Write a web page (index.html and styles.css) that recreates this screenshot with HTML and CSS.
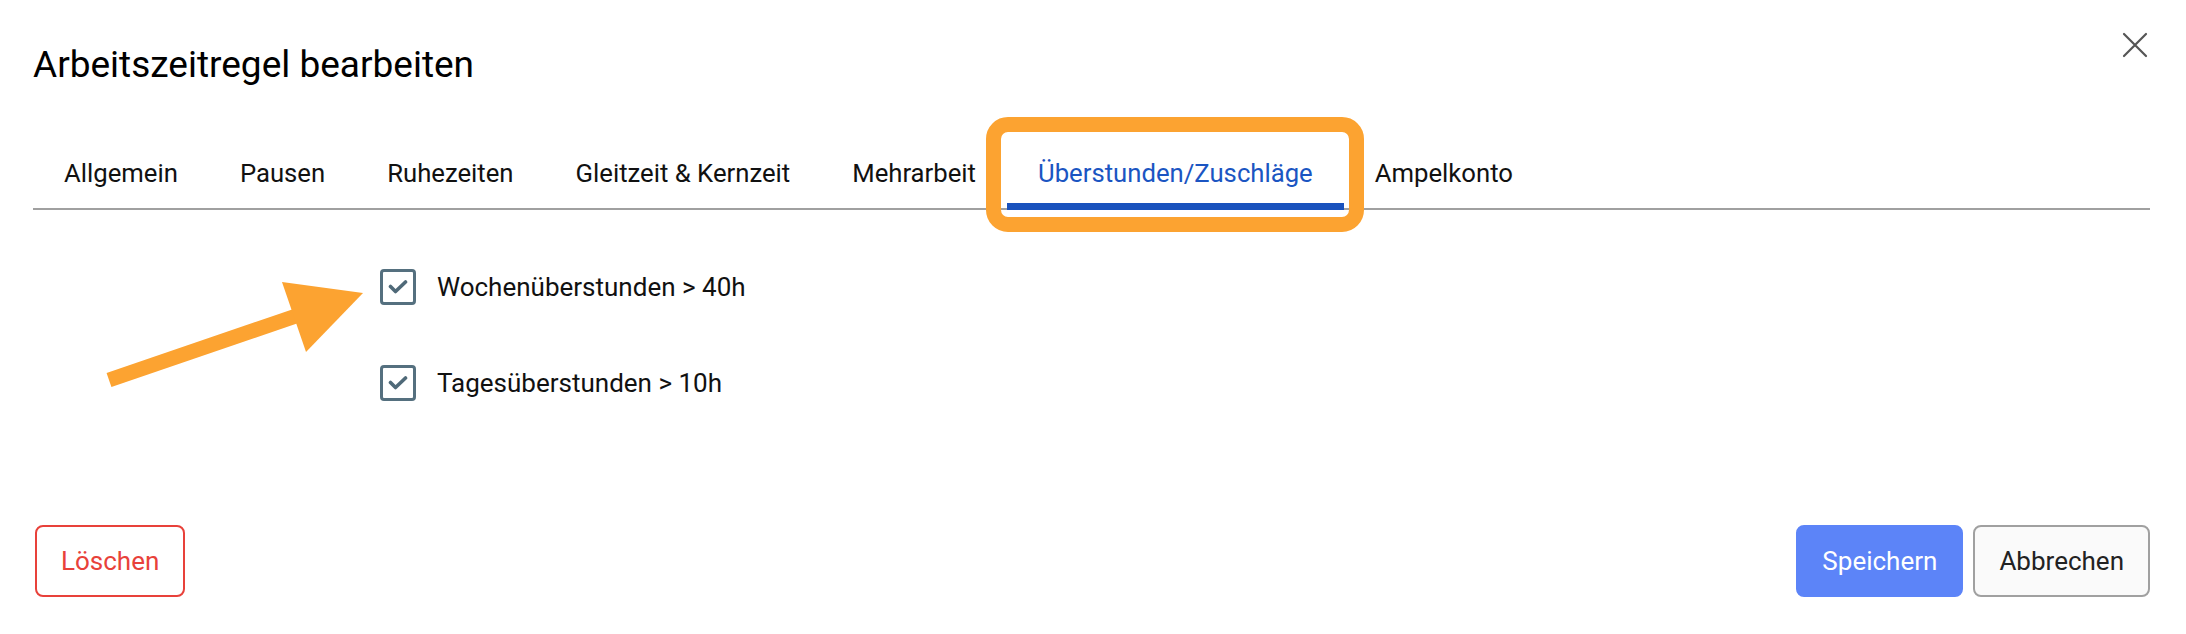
FILE: index.html
```html
<!DOCTYPE html>
<html lang="de">
<head>
    <meta charset="UTF-8">
    <meta name="viewport" content="width=device-width, initial-scale=1.0">
    <title>Arbeitszeitregel bearbeiten</title>
    <link rel="stylesheet" href="styles.css">
</head>
<body>

    <div class="dialog">
        <div class="dialog-header">
            <h1 class="dialog-title">Arbeitszeitregel bearbeiten</h1>
            <svg class="close" width="26" height="26" viewBox="0 0 26 26">
                <path d="M2 2 L24 24 M24 2 L2 24" stroke="#555" stroke-width="2.2" fill="none" stroke-linecap="round"/>
            </svg>
        </div>

        <div class="tabs">
            <div class="tab">Allgemein</div>
            <div class="tab">Pausen</div>
            <div class="tab">Ruhezeiten</div>
            <div class="tab">Gleitzeit &amp; Kernzeit</div>
            <div class="tab">Mehrarbeit</div>
            <div class="tab active">
                Überstunden/Zuschläge
                <!-- Markierung -->
                <span class="highlight"></span>
            </div>
            <div class="tab">Ampelkonto</div>
        </div>

        <div class="options">
            <label class="option">
                <span class="checkbox">
                    <svg width="20" height="14" viewBox="0 0 20 14"><path d="M2.5 6.5 L7.5 11.5 L17.5 2" stroke="#4f6978" stroke-width="3.6" fill="none" stroke-linecap="round" stroke-linejoin="round"/></svg>
                </span>
                <span class="option-label">Wochenüberstunden &gt; 40h</span>
            </label>
            <label class="option">
                <span class="checkbox">
                    <svg width="20" height="14" viewBox="0 0 20 14"><path d="M2.5 6.5 L7.5 11.5 L17.5 2" stroke="#4f6978" stroke-width="3.6" fill="none" stroke-linecap="round" stroke-linejoin="round"/></svg>
                </span>
                <span class="option-label">Tagesüberstunden &gt; 10h</span>
            </label>
        </div>

        <div class="dialog-footer">
            <button class="btn btn-danger">Löschen</button>
            <div class="btn-group">
                <button class="btn btn-primary">Speichern</button>
                <button class="btn btn-default">Abbrechen</button>
            </div>
        </div>

        <!-- Pfeil -->
        <svg class="arrow" width="270" height="120" viewBox="0 0 270 120">
            <line x1="9" y1="105" x2="196" y2="41" stroke="#fca331" stroke-width="15"/>
            <polygon points="182,7 263,18 206,77" fill="#fca331"/>
        </svg>
    </div>

</body>
</html>
```

FILE: styles.css
```css
body {
    margin: 0;
    padding: 0;
    background-color: #fff;
    color: #000;
    font-family: Roboto, "Noto Sans", sans-serif;
}

.dialog {
    position: relative;
    padding: 33px 36px 0 33px;
}

.dialog-header {
    display: flex;
    justify-content: space-between;
    align-items: flex-start;
}

.dialog-title {
    margin: 11px 0 0;
    font-size: 37px;
    font-weight: 400;
    line-height: 42px;
}

.close {
    margin-top: -1px;
    margin-right: 2px;
}

.tabs {
    display: flex;
    margin-top: 52px;
    border-bottom: 2px solid #a0a0a0;
}

.tab {
    position: relative;
    padding: 20px 31px;
    font-size: 25.7px;
    line-height: 30px;
    color: #111;
}

.tab.active {
    color: #1b55c2;
}

.tab.active::after {
    content: "";
    position: absolute;
    left: 0;
    right: 0;
    bottom: -2px;
    height: 7px;
    background: #1a52bd;
}

.highlight {
    position: absolute;
    left: -21px;
    right: -20px;
    top: -21px;
    bottom: -24px;
    border: 15px solid #fca331;
    border-radius: 22px;
    z-index: 2;
    pointer-events: none;
}

.options {
    display: flex;
    flex-direction: column;
    gap: 60px;
    margin-top: 59px;
    padding-left: 347px;
}

.option {
    display: flex;
    align-items: center;
    gap: 21px;
    font-size: 26px;
    line-height: 30px;
    color: #111;
}

.checkbox {
    box-sizing: border-box;
    width: 36px;
    height: 36px;
    border: 3.5px solid #55707f;
    border-radius: 4px;
    display: flex;
    justify-content: center;
    align-items: center;
}

.dialog-footer {
    display: flex;
    justify-content: space-between;
    align-items: center;
    margin-top: 124px;
}

.btn-group {
    display: flex;
    gap: 10px;
}

.btn {
    height: 72px;
    padding: 0 24px;
    font-family: Roboto, "Noto Sans", sans-serif;
    font-size: 26px;
    border: 2px solid transparent;
    border-radius: 8px;
    cursor: pointer;
}

.btn-danger {
    margin-left: 2px;
    background: #fff;
    color: #e8413a;
    border-color: #e8413a;
}

.btn-primary {
    background: #5c84f8;
    border-color: #5c84f8;
    color: #fff;
}

.btn-default {
    background: #fafafa;
    border-color: #a0a0a0;
    color: #222;
}

.arrow {
    position: absolute;
    left: 100px;
    top: 275px;
}
```
